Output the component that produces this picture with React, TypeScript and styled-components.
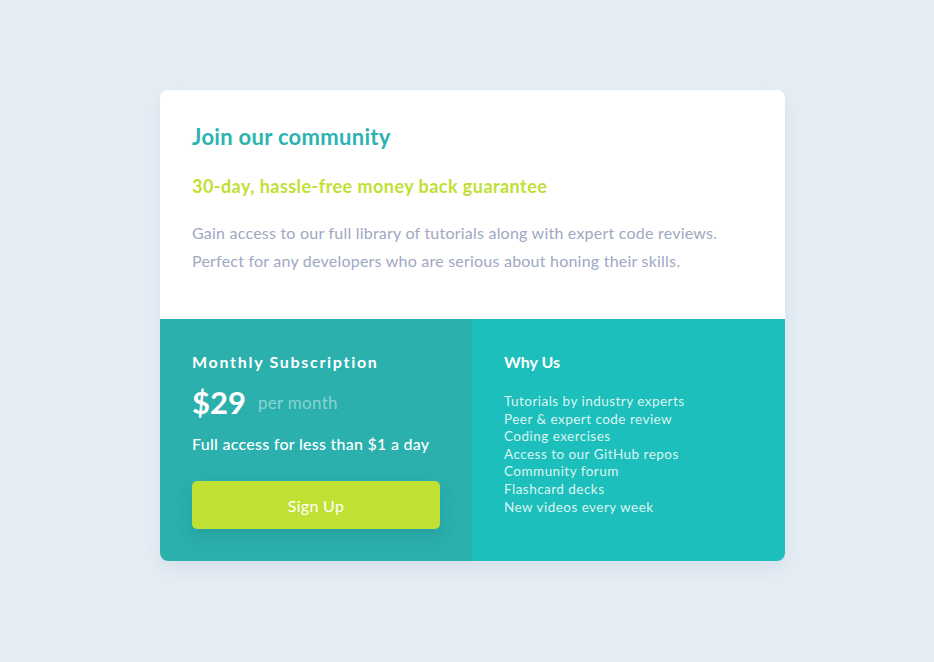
import styled, { createGlobalStyle } from 'styled-components';

const GlobalStyle = createGlobalStyle`
  * {
    box-sizing: border-box;
  }

  body {
    margin: 0;
    background-color: #e6eef5;
    font-family: Lato, 'Open Sans', sans-serif;
  }
`;

const Page = styled.main`
  min-height: 662px;
  padding: 90px 0 0 160px;
`;

const Card = styled.section`
  width: 625px;
  border-radius: 8px;
  overflow: hidden;
  background-color: #ffffff;
  box-shadow: 0 8px 20px rgba(120, 140, 170, 0.15);
`;

const Top = styled.div`
  padding: 32px 32px 44px;
`;

const Title = styled.h1`
  margin: 0;
  font-size: 22px;
  line-height: 30px;
  font-weight: 700;
  letter-spacing: 0.3px;
  color: #2bb3b1;
`;

const Guarantee = styled.h2`
  margin: 22px 0 21px;
  font-size: 18px;
  line-height: 24px;
  font-weight: 700;
  letter-spacing: 0.45px;
  color: #c0df34;
`;

const Intro = styled.p`
  margin: 0;
  font-size: 16px;
  line-height: 28px;
  letter-spacing: 0.22px;
  color: #a0a8c2;
`;

const Bottom = styled.div`
  display: grid;
  grid-template-columns: 312px 1fr;
  min-height: 242px;
`;

const Column = styled.div<{ $shade: string }>`
  padding: 32px;
  background-color: ${(p) => p.$shade};
  color: #ffffff;
`;

const Heading = styled.h3<{ $spaced?: boolean }>`
  margin: 0;
  font-size: 16px;
  line-height: 22px;
  font-weight: 700;
  letter-spacing: ${(p) => (p.$spaced ? '1.7px' : '0')};
`;

const PriceRow = styled.div`
  display: flex;
  align-items: center;
  gap: 12px;
  margin-top: 11px;
`;

const Price = styled.span`
  font-size: 31px;
  line-height: 36px;
  font-weight: 700;
`;

const Period = styled.span`
  font-size: 17px;
  letter-spacing: 0.3px;
  color: rgba(255, 255, 255, 0.45);
`;

const Note = styled.p`
  margin: 12px 0 0;
  font-size: 16px;
  line-height: 24px;
  font-weight: 500;
  letter-spacing: 0.27px;
`;

const SignUp = styled.button`
  display: block;
  width: 248px;
  height: 48px;
  margin-top: 25px;
  border: none;
  border-radius: 5px;
  background-color: #c0e033;
  color: #ffffff;
  font-family: inherit;
  font-size: 16px;
  letter-spacing: 0.3px;
  box-shadow: 0 8px 16px rgba(30, 90, 90, 0.18);
  cursor: pointer;
`;

const Perks = styled.ul`
  list-style: none;
  margin: 20px 0 0;
  padding: 0;
`;

const Perk = styled.li`
  font-size: 13.5px;
  line-height: 17.6px;
  letter-spacing: 0.47px;
  color: rgba(255, 255, 255, 0.85);
`;

const perks = [
  'Tutorials by industry experts',
  'Peer & expert code review',
  'Coding exercises',
  'Access to our GitHub repos',
  'Community forum',
  'Flashcard decks',
  'New videos every week',
];

const App = () => {
  return (
    <>
      <GlobalStyle />
      <Page>
        <Card>
          <Top>
            <Title>Join our community</Title>
            <Guarantee>30-day, hassle-free money back guarantee</Guarantee>
            <Intro>
              Gain access to our full library of tutorials along with expert code reviews.
              <br />
              Perfect for any developers who are serious about honing their skills.
            </Intro>
          </Top>
          <Bottom>
            <Column $shade="#2bb0ae">
              <Heading $spaced>Monthly Subscription</Heading>
              <PriceRow>
                <Price>$29</Price>
                <Period>per month</Period>
              </PriceRow>
              <Note>Full access for less than $1 a day</Note>
              <SignUp>Sign Up</SignUp>
            </Column>
            <Column $shade="#1cbfbb">
              <Heading>Why Us</Heading>
              <Perks>
                {perks.map((perk) => (
                  <Perk key={perk}>{perk}</Perk>
                ))}
              </Perks>
            </Column>
          </Bottom>
        </Card>
      </Page>
    </>
  );
};

export default App;
